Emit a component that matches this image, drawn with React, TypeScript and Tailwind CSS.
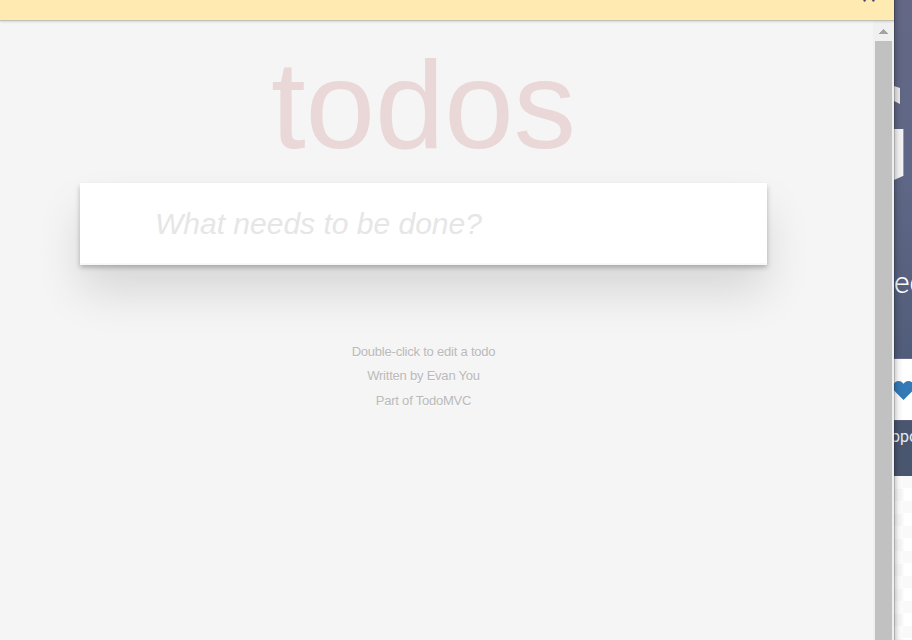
import React from "react";

function Backdrop() {
  return (
    <aside className="relative flex w-[18px] shrink-0 flex-col overflow-hidden bg-white">
      <div className="relative h-[359px] shrink-0 overflow-hidden border-b border-[#6b6b8e] bg-linear-to-b from-[#646786] via-[#5f6786] to-[#505d7a]">
        <svg className="absolute left-0 top-0" width="18" height="200" viewBox="0 0 18 200">
          <path d="M0 86L6 88V104L0 101Z" fill="#ececec" />
          <path d="M0 129H9V176L0 180Z" fill="#f6f6f6" />
          <path d="M9 129H10V176H9Z" fill="#8c9db4" />
        </svg>
        <span className="absolute left-0 top-[265px] font-['Roboto',sans-serif] text-[30px] leading-[36px] font-light text-white">ec</span>
      </div>
      <div className="h-[61px] shrink-0 bg-white pt-[21px]">
        <svg width="20" height="22" viewBox="0 0 20 22">
          <path d="M9.500 20L1 11.500C-1.500 8.500-1 4.500 1 2.300C4 0 7.500 .500 9.500 3.800C11.500 .500 15 0 18 2.300C20 4.500 20.500 8.500 18 11.500Z" fill="#337ab7" />
        </svg>
      </div>
      <div className="relative h-[56px] shrink-0 border-t border-[#5b5c7b] bg-[#49566f]">
        <span className="absolute -left-[3px] top-[5px] font-['Roboto',sans-serif] text-[16px] leading-[22px] text-[#e9ecf0]">ppo</span>
      </div>
      <div className="flex-1 bg-[repeating-conic-gradient(#f9f9f9_0_25%,#ffffff_0_50%)] bg-[length:25px_25px] bg-[position:-3.5px_0px]" />
      <div className="absolute inset-y-0 left-0 w-[9px] bg-linear-to-r from-black/20 via-black/5 to-transparent" />
      <div className="absolute inset-y-0 left-0 w-px bg-black/15" />
    </aside>
  );
}

function Scrollbar() {
  return (
    <div className="flex w-[21px] shrink-0 flex-col bg-[#f0f0f0] pl-[2px] pr-[2px]">
      <div className="flex h-[20px] shrink-0 items-center justify-center">
        <svg width="9" height="5" viewBox="0 0 9 5" shapeRendering="crispEdges">
          <path d="M4 0H5V1H6V2H7V3H8V4H9V5H0V4H1V3H2V2H3V1H4Z" fill="#a3a3a3" />
        </svg>
      </div>
      <div className="w-[17px] flex-1 bg-[#c1c1c1]" />
    </div>
  );
}

export default function App() {
  return (
    <div className="flex h-[640px] w-[912px] overflow-hidden bg-white font-['Liberation_Sans',Arial,sans-serif]">
      <div className="flex w-[894px] shrink-0 flex-col">
        <header className="relative z-10 flex h-[21px] shrink-0 justify-end overflow-hidden border-b border-[#c2bfb4] bg-[#ffeab2] pr-[19px] shadow-[0_1px_2px_rgba(0,0,0,0.12)]">
          <svg width="12" height="4" viewBox="0 0 12 4">
            <path d="M1.500 .500L3 -1.500M10.500 .500L9 -1.500" stroke="#4c4c6d" strokeWidth="2.200" strokeLinecap="round" />
          </svg>
        </header>
        <div className="flex min-h-0 flex-1">
          <main className="flex w-[873px] flex-col items-start overflow-hidden bg-[#f5f5f5] pl-[80px]">
            <h1 className="mt-[12px] h-[150px] w-[687px] text-center text-[125px] leading-[144px] tracking-[-0.2px] text-[#ead7d7]">todos</h1>
            <div className="h-[82px] w-[687px] bg-white pl-[75px] text-[30px] leading-[82px] text-[#e6e6e6] italic shadow-[0_2.5px_5px_rgba(0,0,0,0.25),0_27px_46px_rgba(0,0,0,0.12),inset_0_-2px_1px_rgba(0,0,0,0.03)]">
              What needs to be done?
            </div>
            <footer className="mt-[75px] w-[687px] text-center text-[13px] leading-[24px] tracking-[-0.22px] text-[#bababa] [text-shadow:0_1px_0_rgba(255,255,255,0.5)]">
              <p>Double-click to edit a todo</p>
              <p>Written by Evan You</p>
              <p className="mt-px">Part of TodoMVC</p>
            </footer>
          </main>
          <Scrollbar />
        </div>
      </div>
      <Backdrop />
    </div>
  );
}
